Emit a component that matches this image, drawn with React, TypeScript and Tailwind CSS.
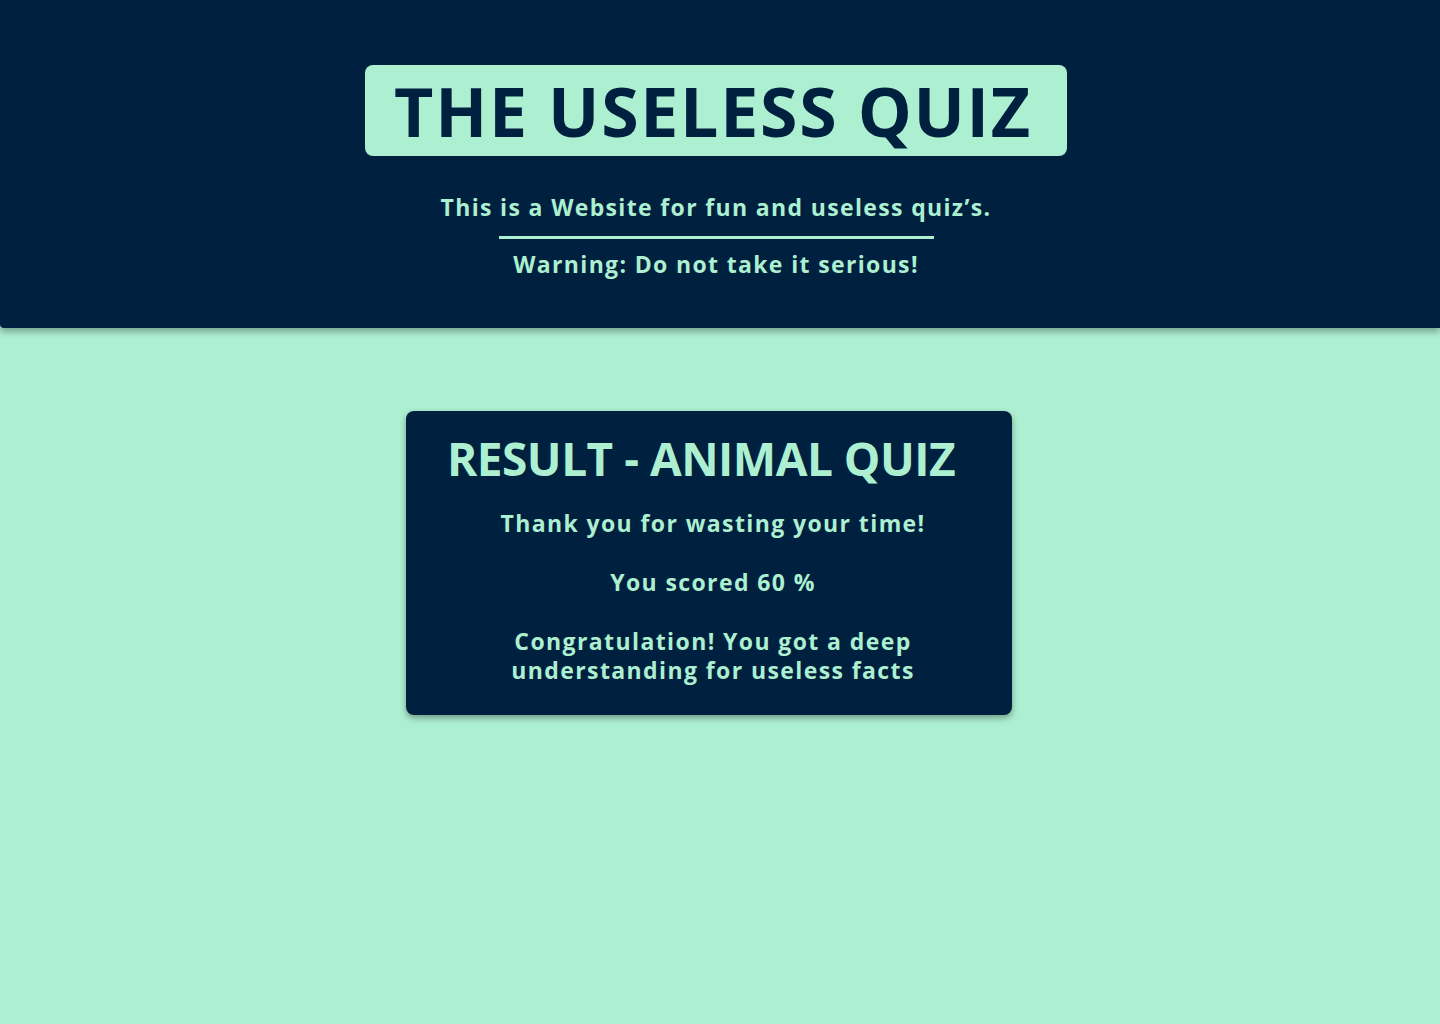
export default function App() {
  return (
    <div
      className="min-h-screen bg-[#adefd1] text-[#adefd1]"
      style={{ fontFamily: "'Open Sans', 'DejaVu Sans', sans-serif" }}
    >
      <header className="flex h-[328px] flex-col items-center rounded-bl-[4px] bg-[#00203f] pr-[8px] pt-[65px] shadow-[0_4px_6px_rgba(0,0,0,0.3)]">
        <div className="flex h-[91px] w-[702px] items-center justify-center rounded-[8px] bg-[#adefd1] pr-[6px]">
          <h1 className="text-[68px] font-bold leading-none tracking-[1.7px] text-[#00203f]">
            THE USELESS QUIZ
          </h1>
        </div>
        <p className="mt-[38px] text-[23px] font-bold leading-[26px] tracking-[1.35px]">
          This is a Website for fun and useless quiz’s.
        </p>
        <hr className="mt-[16px] h-[3px] w-[435px] border-0 bg-[#adefd1]" />
        <p className="mt-[12px] text-[23px] font-bold leading-[26px] tracking-[1.35px]">
          Warning: Do not take it serious!
        </p>
      </header>

      <main className="flex justify-center pr-[22px] pt-[83px]">
        <section className="w-[606px] rounded-[8px] bg-[#00203f] pb-[30px] pt-[22px] text-center shadow-[0_3px_6px_rgba(0,0,0,0.35)]">
          <h2 className="pr-[16px] text-[46px] font-bold leading-[50px] tracking-[-0.5px]">
            RESULT - ANIMAL QUIZ
          </h2>
          <div className="mt-[26px] flex flex-col items-center gap-[30px] pl-[8px] text-[23px] font-bold leading-[29px] tracking-[1.4px]">
            <p>Thank you for wasting your time!</p>
            <p>You scored 60 %</p>
            <p className="w-[440px]">Congratulation! You got a deep understanding for useless facts</p>
          </div>
        </section>
      </main>
    </div>
  );
}
